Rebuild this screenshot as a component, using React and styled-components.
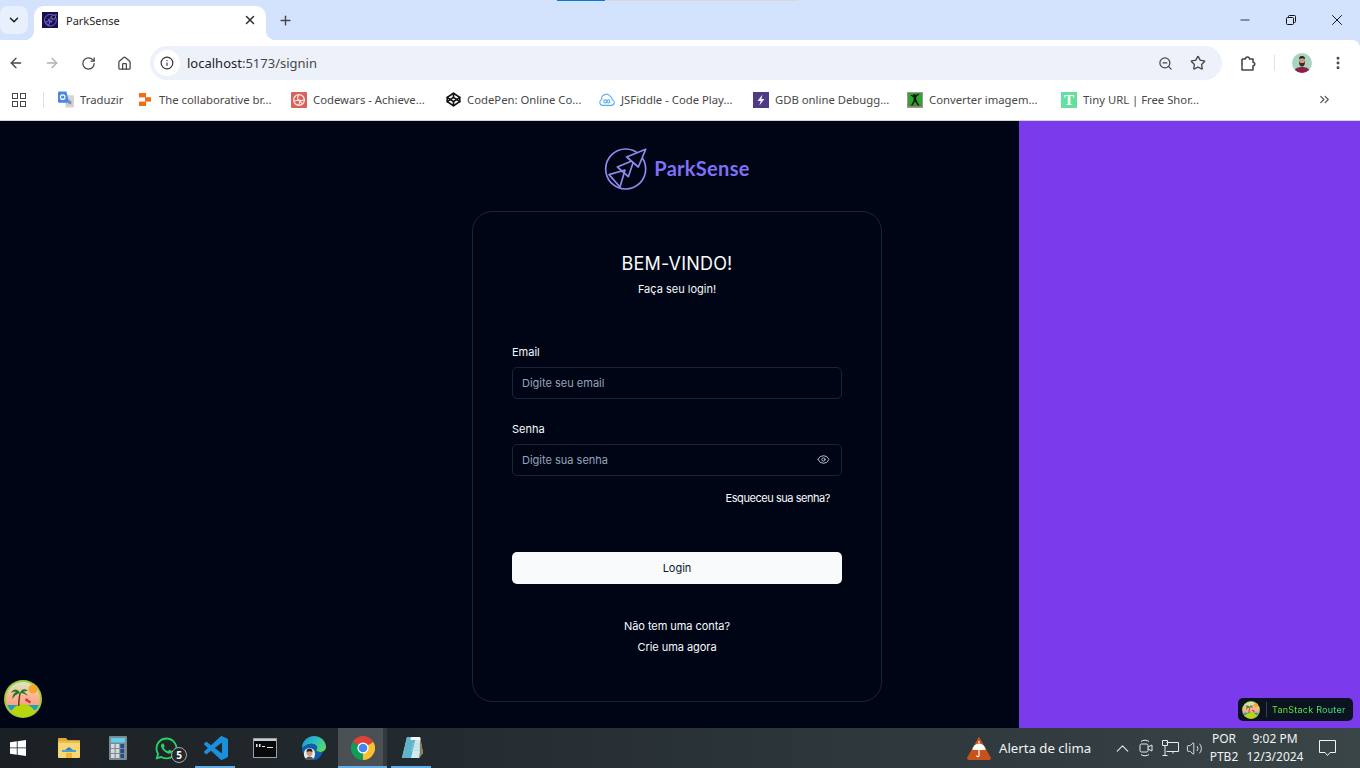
import React from "react";
import styled, { createGlobalStyle } from "styled-components";
import {
  ArrowLeft,
  ArrowRight,
  ChevronDown,
  ChevronUp,
  ChevronsRight,
  Codepen,
  EllipsisVertical,
  Eye,
  House,
  Info,
  Minus,
  Plus,
  RotateCw,
  Star,
  Volume2,
  X,
  ZoomOut,
} from "lucide-react";
import { FaWhatsapp } from "react-icons/fa";

const GlobalStyle = createGlobalStyle`
  * { box-sizing: border-box; }
  html, body { margin: 0; height: 100%; overflow: hidden; }
  body { font-family: "Noto Sans", "Liberation Sans", sans-serif; }
  #root { height: 100%; }
`;

function ParkLogo({ size = 44, weight = 5 }) {
  return (
    <svg width={size} height={size} viewBox="12 8 132 132" fill="none" stroke="#9488ee" strokeWidth={weight} strokeLinejoin="round">
      <circle cx="77" cy="71" r="60" />
      <path d="M102 44 52 65 85 94Z" />
      <path d="M75 74 27 88 60 125Z" />
      <path d="M137 12 80 35 115 65Z" fill="#000515" />
    </svg>
  );
}

function TranslateIcon() {
  return (
    <svg width="17" height="17" viewBox="0 0 17 17">
      <path d="M7 4h9a1 1 0 0 1 1 1v11a1 1 0 0 1-1 1H8z" fill="#d4d4d4" />
      <path d="M1 0h8l3 12H1a1 1 0 0 1-1-1V1a1 1 0 0 1 1-1z" fill="#4a86e8" />
      <path d="M12.5 8l1 2.7 1.8.1-1.4 1.2.5 2-1.9-1.1-1.7 1.1.4-2-1.3-1.2 1.8-.1z" fill="#8a8f98" />
      <circle cx="5" cy="6" r="2.4" fill="none" stroke="#fff" strokeWidth="1.2" />
    </svg>
  );
}

function FigmaBitsIcon() {
  return (
    <svg width="12" height="13" viewBox="0 0 12 13" fill="#f56a14">
      <rect x="0" y="0" width="7" height="4.4" />
      <rect x="6" y="4.2" width="6" height="4.4" />
      <rect x="0" y="8.6" width="7" height="4.4" />
    </svg>
  );
}

function CodewarsIcon() {
  return (
    <svg width="16" height="16" viewBox="0 0 16 16" fill="none">
      <rect width="16" height="16" rx="1" fill="#d9635b" />
      <circle cx="8" cy="8" r="5.4" stroke="#fbe7e4" strokeWidth="1.3" />
      <path d="M8 2.6C6 6 6 7 8 8s6 0 5.4-1M2.6 9C6 8 7 9 8 8s1 5-1 5.4M8 8c2 2 3 4 4 4" stroke="#fbe7e4" strokeWidth="1.1" />
    </svg>
  );
}

function FiddleIcon() {
  return (
    <svg width="16" height="13" viewBox="0 0 16 13" fill="none" stroke="#5aaef0" strokeWidth="1.1">
      <path d="M3.6 12.4A3 3 0 0 1 2.8 6.6 3.8 3.8 0 0 1 6 1.6a4 4 0 0 1 5.4 1.9 2.9 2.9 0 0 1 1.6 3 3 3 0 0 1-.4 5.9z" />
      <circle cx="6.2" cy="8.4" r="1.5" />
      <circle cx="9.4" cy="8.4" r="1.5" />
    </svg>
  );
}

function GdbIcon() {
  return (
    <svg width="16" height="16" viewBox="0 0 16 16">
      <rect width="16" height="16" fill="#4f3a85" />
      <path d="M9.4 2.6 4.6 9h3l-1.2 4.6L11.4 7H8.5z" fill="#f1eefb" />
    </svg>
  );
}

function ConverterIcon() {
  return (
    <svg width="16" height="16" viewBox="0 0 16 16">
      <rect width="16" height="16" fill="#9a9a9a" />
      <rect x="1" y="1" width="14" height="13" fill="#2fa52f" />
      <rect x="1" y="12.5" width="14" height="2" fill="#5f7a3a" />
      <path d="M8 3.4 12 1.6l.3.7L9.2 5l.2 3 3 5.6H11L8 9.6 5.6 13.6H4L6.6 8.4V5.6L3.6 3.6l.4-.6z" fill="#0f1a0f" />
      <circle cx="7.6" cy="3.2" r="1.2" fill="#0f1a0f" />
    </svg>
  );
}

function BeachLogo({ size = 38 }) {
  return (
    <svg width={size} height={size} viewBox="0 0 38 38">
      <defs>
        <linearGradient id={`sky${size}`} x1="0" y1="0" x2="0" y2="1">
          <stop offset="0" stopColor="#d7e8c4" />
          <stop offset="0.45" stopColor="#fbb38f" />
          <stop offset="1" stopColor="#f98d7e" />
        </linearGradient>
      </defs>
      <circle cx="19" cy="19" r="19" fill="#9ccd3c" />
      <circle cx="19" cy="19" r="17" fill={`url(#sky${size})`} />
      <circle cx="29" cy="9" r="4.5" fill="#f7a52b" />
      <path d="M3.4 25h31.2a17 17 0 0 1-3 5H6.4a17 17 0 0 1-3-5z" fill="#1ea0b4" />
      <path d="M7 32c3-6 8-8 12-8s9 2 12 8a17 17 0 0 1-24 0z" fill="#b6d60f" />
      <path d="M14 26c0-5 .5-9 1.5-13h1.4c-1 4-1.4 8-1.4 13z" fill="#5c3a1d" />
      <path d="M16 13C13 8 9 9 7 13c2-1.500 4-1.500 5-1-2 1-4 4-3.500 7 1.500-3 4-5 7.500-6zM16 13c1-4 5-5 8-2-2 0-3.500 0-5 1 2 0 4 2 4.500 4-2-2-4.500-3-7.500-3z" fill="#1f7a26" />
      <path d="M22 18l5 3.500-1 2-5-3z" fill="#d2314a" />
    </svg>
  );
}

function WindowsLogo() {
  return (
    <svg width="16" height="16" viewBox="0 0 16 16" fill="#fff">
      <path d="M0 2.300 6.800 1.300v6.200H0zM7.600 1.200 16 0v7.500H7.600zM0 8.300h6.800v6.400L0 13.700zM7.600 8.300H16V16l-8.400-1.200z" />
    </svg>
  );
}

function FolderIcon() {
  return (
    <svg width="22" height="20" viewBox="0 0 22 20">
      <path d="M0 1a1 1 0 0 1 1-1h7l2 2.500H0z" fill="#e0a92e" />
      <rect y="2.500" width="22" height="17.500" rx="1" fill="#f7d774" />
      <rect y="2.500" width="22" height="2.500" fill="#eebc48" />
      <path d="M4 14h14v-2H4z" fill="#4a9fd8" />
      <path d="M8 20v-5h6v5z" fill="#f3b32c" />
      <path d="M7 12l4-3 4 3z" fill="#2a7fc0" />
    </svg>
  );
}

function CalculatorIcon() {
  const keys = [0, 1, 2, 3, 4, 5, 6, 7, 8];
  return (
    <svg width="18" height="24" viewBox="0 0 18 24">
      <rect width="18" height="24" rx="1" fill="#7c8a94" />
      <rect x="2" y="2" width="14" height="4.500" fill="#5fd0ea" />
      {keys.map((k) => (
        <rect key={k} x={2 + (k % 3) * 4.700} y={8 + Math.floor(k / 3) * 5} width="3.600" height="4" fill={k % 3 === 2 ? "#1f4e8c" : "#d5dadd"} />
      ))}
    </svg>
  );
}

function VsCodeIcon() {
  return (
    <svg width="24" height="24" viewBox="0 0 24 24" fill="#1c8fdc">
      <path d="M23.150 2.587 18.210.21a1.494 1.494 0 0 0-1.705.29l-9.460 8.630-4.120-3.128a.999.999 0 0 0-1.276.057L.327 7.261A1 1 0 0 0 .326 8.740L3.899 12 .326 15.260a1 1 0 0 0 .001 1.479L1.650 17.940a.999.999 0 0 0 1.276.057l4.120-3.128 9.460 8.630a1.492 1.492 0 0 0 1.704.29l4.942-2.377A1.500 1.500 0 0 0 24 20.060V3.939a1.500 1.500 0 0 0-.850-1.352zm-5.146 14.861L10.826 12l7.178-5.448v10.896z" />
    </svg>
  );
}

function CmdIcon() {
  return (
    <svg width="24" height="20" viewBox="0 0 24 20">
      <rect width="24" height="20" fill="#9aa0a4" />
      <rect x="1" y="1" width="22" height="18" fill="#0a0a0a" />
      <rect x="1" y="1" width="22" height="2" fill="#c9cdd0" />
      <path d="M3 6h1.500v3H3zM6 6h1.500v3H6zM9 8h3v1H9zM14 9h6v1h-6z" fill="#e8e8e8" />
    </svg>
  );
}

function EdgeIcon() {
  return (
    <svg width="24" height="24" viewBox="0 0 24 24">
      <defs>
        <linearGradient id="edgeTop" x1="0" y1="0" x2="1" y2="0.6">
          <stop offset="0" stopColor="#1b8fd6" />
          <stop offset="0.55" stopColor="#2cc0c4" />
          <stop offset="1" stopColor="#58d66a" />
        </linearGradient>
      </defs>
      <path d="M0 12C0 5 5.500 0 12 0c7 0 12 5 12 11 0 3-2.500 5-6 5-2.500 0-4-1-4-2 1-1 1.500-2 .8-3.500C13.500 7.500 9 7 5.500 8.500 3 9.700 1 11 0 12z" fill="url(#edgeTop)" />
      <path d="M0 12c1-1 3-2.300 5.500-3.500C9 7 13.500 7.500 14.800 10.500c.7 1.500.2 2.500-.8 3.500 0 1 1.500 2 4 2 1 0 2-.2 3-.6-1.500 4.500-5 8.600-9.500 8.600C5 24 0 18.500 0 12z" fill="#0f5fae" />
      <rect x="2" y="12" width="11" height="12" rx="5.500" fill="#f1efec" />
      <circle cx="7.500" cy="17" r="3" fill="#c99a80" />
      <path d="M4.500 16c0-2.400 1.300-3.400 3-3.400s3 1 3 3.400c-2-1-4-1-6 0z" fill="#2a1f1a" />
      <path d="M3.500 24c.5-2.500 2-3.500 4-3.500s3.500 1 4 3.500z" fill="#555" />
    </svg>
  );
}

function ChromeIcon() {
  return (
    <svg width="24" height="24" viewBox="0 0 24 24">
      <path d="M12 12 1.600 6a12 12 0 0 1 20.800 0z" fill="#db4437" />
      <path d="M12 12 1.600 6A12 12 0 0 0 12 24z" fill="#0f9d58" />
      <path d="M12 12v12A12 12 0 0 0 22.400 6z" fill="#fbc02d" />
      <circle cx="12" cy="12" r="5.600" fill="#fff" />
      <circle cx="12" cy="12" r="4.300" fill="#4285f4" />
    </svg>
  );
}

function NotepadIcon() {
  return (
    <svg width="24" height="24" viewBox="0 0 24 24">
      <path d="M7 1h13l3 16-4 5H2z" fill="#cfeaf0" />
      <path d="M7 1 2 22h9l5-21z" fill="#5fb4c8" />
      <path d="M11 1h9l.7 3H10.300z" fill="#f2f7f7" />
      <path d="M20 1l3 16-4 5 .8-5z" fill="#8a7a5a" />
      <path d="M12 8h7M11.500 11h8M11 14h8" stroke="#a8d6e0" strokeWidth="0.800" />
    </svg>
  );
}

function WeatherAlertIcon() {
  return (
    <svg width="24" height="24" viewBox="0 0 24 24">
      <path d="M12 1.500 23.500 22a1 1 0 0 1-1 1.500h-21a1 1 0 0 1-1-1.500z" fill="#c7521a" stroke="#c7521a" strokeLinejoin="round" />
      <path d="M5.500 14a6.500 6.500 0 0 1 13 0z" fill="#fff" />
      <path d="M12 14v5.500a1.200 1.200 0 0 1-2.400 0" fill="none" stroke="#fff" strokeWidth="1.200" />
      <path d="M12 5v2" stroke="#fff" strokeWidth="1.200" />
    </svg>
  );
}

function MeetIcon() {
  return (
    <svg width="14" height="18" viewBox="0 0 14 18" fill="none" stroke="#e8ecee" strokeWidth="1">
      <rect x="1" y="5" width="8" height="8" rx="1.500" />
      <path d="m9 8 4-2v6l-4-2M2 2.500C4 .8 8 .8 10 2.500M2 15.500c2 1.700 6 1.700 8 0" />
    </svg>
  );
}

function NetworkIcon() {
  return (
    <svg width="17" height="16" viewBox="0 0 17 16" fill="none" stroke="#e8ecee" strokeWidth="1">
      <path d="M4.500 2.500h12v9h-12M9 11.500h6M11 11.500v2M.500.500h5v5h-5zM3 5.500v10M.500 15.500h5" />
    </svg>
  );
}

function NotificationIcon() {
  return (
    <svg width="17" height="16" viewBox="0 0 17 16" fill="none" stroke="#f2f4f5" strokeWidth="1">
      <path d="M.500.500h16v12H11l-2.500 3-2.500-3H.500z" />
    </svg>
  );
}

function ProfileAvatar() {
  return (
    <svg width="20" height="20" viewBox="0 0 20 20">
      <clipPath id="avatarClip"><circle cx="10" cy="10" r="10" /></clipPath>
      <g clipPath="url(#avatarClip)">
        <rect width="20" height="20" fill="#a8d5c2" />
        <path d="M2 20c0-4 3-6 8-6s8 2 8 6z" fill="#8e2048" />
        <rect x="7" y="4" width="6" height="8" rx="3" fill="#c99a80" />
        <path d="M7 8c0 4 1 5.500 3 5.500S13 12 13 8l-1 2H8z" fill="#3a2a22" />
        <path d="M7 6c0-2 1-3 3-3s3 1 3 3c-2-1-4-1-6 0z" fill="#2a1f1a" />
      </g>
    </svg>
  );
}

function RestoreIcon() {
  return (
    <svg width="10" height="10" viewBox="0 0 10 10" fill="none" stroke="#111" strokeWidth="1">
      <rect x=".500" y="2.500" width="7" height="7" rx="1" />
      <path d="M2.500 2.500v-1a1 1 0 0 1 1-1h5a1 1 0 0 1 1 1v5a1 1 0 0 1-1 1h-1" />
    </svg>
  );
}

function PuzzleIcon() {
  return (
    <svg width="16" height="16" viewBox="0 0 16 16" fill="none" stroke="#474747" strokeWidth="1.600" strokeLinejoin="round">
      <path d="M1 4h3.500a2 2 0 0 1 4 0H12v3.300a1.700 1.700 0 0 1 0 3.400V15H1v-3.500" />
      <path d="M1 11.500V4" />
    </svg>
  );
}

function App() {
  const bookmarks = [
    { title: "Traduzir", width: 79, icon: <TranslateIcon /> },
    { title: "The collaborative br...", width: 154, icon: <FigmaBitsIcon /> },
    { title: "Codewars - Achieve...", width: 154, icon: <CodewarsIcon /> },
    { title: "CodePen: Online Co...", width: 154, icon: <Codepen size={15} color="#111" strokeWidth={2.6} /> },
    { title: "JSFiddle - Code Play...", width: 154, icon: <FiddleIcon /> },
    { title: "GDB online Debugg...", width: 154, icon: <GdbIcon /> },
    { title: "Converter imagem...", width: 154, icon: <ConverterIcon /> },
    { title: "Tiny URL | Free Shor...", width: 154, icon: <TinyFavicon>T</TinyFavicon> },
  ];

  return (
    <Screen>
      <GlobalStyle />
      <Browser>
        <ProgressSliver />
        <TabStrip>
          <TabSearch>
            <ChevronDown size={14} color="#1f1f1f" strokeWidth={2.6} />
          </TabSearch>
          <ActiveTab>
            <TabFavicon>
              <ParkLogo size={13} weight={7} />
            </TabFavicon>
            <TabTitle>ParkSense</TabTitle>
            <X size={14} color="#333" strokeWidth={2.6} />
          </ActiveTab>
          <NewTab>
            <Plus size={15} color="#444" strokeWidth={2.2} />
          </NewTab>
          <WindowControls>
            <WindowButton><Minus size={14} color="#111" strokeWidth={1.400} /></WindowButton>
            <WindowButton><RestoreIcon /></WindowButton>
            <WindowButton><X size={18} color="#111" strokeWidth={1.300} /></WindowButton>
          </WindowControls>
        </TabStrip>

        <Toolbar>
          <NavButton><ArrowLeft size={16} color="#474747" strokeWidth={2} /></NavButton>
          <NavButton><ArrowRight size={16} color="#b0b0b0" strokeWidth={2} /></NavButton>
          <NavButton><RotateCw size={15} color="#474747" strokeWidth={2} /></NavButton>
          <NavButton><House size={15} color="#474747" strokeWidth={2} /></NavButton>
          <UrlBar>
            <SiteInfo><Info size={14} color="#333" strokeWidth={2} /></SiteInfo>
            <UrlText>localhost<span>:5173/signin</span></UrlText>
            <UrlActions>
              <ZoomOut size={15} color="#474747" strokeWidth={2} />
              <Star size={16} color="#474747" strokeWidth={2} />
            </UrlActions>
          </UrlBar>
          <ToolbarEnd>
            <PuzzleIcon />
            <ToolbarDivider />
            <ProfileAvatar />
            <EllipsisVertical size={16} color="#474747" strokeWidth={2.4} />
          </ToolbarEnd>
        </Toolbar>

        <BookmarksBar>
          <AppsGrid>
            <i /><i /><i /><i />
          </AppsGrid>
          <BookmarkDivider />
          {bookmarks.map((b) => (
            <Bookmark key={b.title} $width={b.width}>
              <BookmarkIcon>{b.icon}</BookmarkIcon>
              <span>{b.title}</span>
            </Bookmark>
          ))}
          <MoreBookmarks>
            <ChevronsRight size={15} color="#555" strokeWidth={2} />
          </MoreBookmarks>
        </BookmarksBar>
      </Browser>

      <Main>
        <LoginPane>
          <Brand>
            <ParkLogo />
            <BrandName>ParkSense</BrandName>
          </Brand>
          <Card>
            <Title>BEM-VINDO!</Title>
            <Subtitle>Faça seu login!</Subtitle>
            <FirstLabel htmlFor="email">Email</FirstLabel>
            <Field>
              <Input id="email" placeholder="Digite seu email" />
            </Field>
            <Label htmlFor="senha">Senha</Label>
            <Field>
              <Input id="senha" type="password" placeholder="Digite sua senha" />
              <EyeButton><Eye size={13} color="#c4cad4" strokeWidth={1.700} /></EyeButton>
            </Field>
            <Forgot>Esqueceu sua senha?</Forgot>
            <LoginButton>Login</LoginButton>
            <SignupText>Não tem uma conta?</SignupText>
            <SignupLink>Crie uma agora</SignupLink>
          </Card>
        </LoginPane>
        <AccentPane />
        <QueryToggle>
          <BeachLogo />
        </QueryToggle>
        <RouterToggle>
          <BeachLogo size={18} />
          <RouterDivider />
          <RouterLabel>TanStack Router</RouterLabel>
        </RouterToggle>
      </Main>

      <Taskbar>
        <StartCell><WindowsLogo /></StartCell>
        <TaskCell><FolderIcon /></TaskCell>
        <TaskCell><CalculatorIcon /></TaskCell>
        <TaskCell>
          <FaWhatsapp size={25} color="#25d366" />
          <CountBadge>5</CountBadge>
        </TaskCell>
        <TaskCell $running><VsCodeIcon /></TaskCell>
        <TaskCell><CmdIcon /></TaskCell>
        <TaskCell><EdgeIcon /></TaskCell>
        <TaskCell $running $active><ChromeIcon /></TaskCell>
        <TaskCell $running><NotepadIcon /></TaskCell>
        <Tray>
          <WeatherAlert>
            <WeatherAlertIcon />
            <span>Alerta de clima</span>
          </WeatherAlert>
          <TrayIcon $width={24}><ChevronUp size={21} color="#e8ecee" strokeWidth={1.200} /></TrayIcon>
          <TrayIcon $width={24}><MeetIcon /></TrayIcon>
          <TrayIcon $width={24}><NetworkIcon /></TrayIcon>
          <TrayIcon $width={24}><Volume2 size={17} color="#e8ecee" strokeWidth={1.300} /></TrayIcon>
          <TrayText $width={36}>POR<br />PTB2</TrayText>
          <TrayText $width={66}>9:02 PM<br />12/3/2024</TrayText>
          <TrayIcon $width={38}><NotificationIcon /></TrayIcon>
        </Tray>
      </Taskbar>
    </Screen>
  );
}

const Screen = styled.div`
  display: flex;
  flex-direction: column;
  height: 768px;
  width: 1360px;
`;

const Browser = styled.header`
  position: relative;
  flex: 0 0 121px;
  background: #d3e3fd;
`;

const ProgressSliver = styled.div`
  position: absolute;
  top: 0;
  left: 557px;
  width: 241px;
  height: 1px;
  background: linear-gradient(90deg, #0b78d8 0 48px, #d8d8d8 48px);
`;

const TabStrip = styled.div`
  display: flex;
  align-items: flex-end;
  height: 40px;
`;

const TabSearch = styled.div`
  display: flex;
  align-items: center;
  justify-content: center;
  width: 28px;
  height: 28px;
  margin-bottom: 6px;
  background: #e8f0fe;
  border-radius: 8px;
`;

const ActiveTab = styled.div`
  position: relative;
  display: flex;
  align-items: center;
  width: 232px;
  height: 34px;
  margin-left: 6px;
  padding: 0 9px 6px 8px;
  background: #fff;
  border-radius: 10px 10px 0 0;

  &::before,
  &::after {
    content: "";
    position: absolute;
    bottom: 0;
    width: 10px;
    height: 10px;
  }
  &::before {
    left: -10px;
    background: radial-gradient(circle at 0 0, transparent 10px, #fff 10.500px);
  }
  &::after {
    right: -10px;
    background: radial-gradient(circle at 100% 0, transparent 10px, #fff 10.500px);
  }
`;

const TabFavicon = styled.div`
  display: flex;
  align-items: center;
  justify-content: center;
  width: 16px;
  height: 16px;
  background: #170f52;
`;

const TabTitle = styled.span`
  flex: 1;
  margin-left: 8px;
  font-size: 11px;
  color: #1f1f1f;
`;

const NewTab = styled.div`
  display: flex;
  align-items: center;
  justify-content: center;
  width: 28px;
  height: 28px;
  margin: 0 0 6px 5px;
`;

const WindowControls = styled.div`
  display: flex;
  margin-left: auto;
  align-self: flex-start;
`;

const WindowButton = styled.div`
  display: flex;
  align-items: center;
  justify-content: center;
  width: 46px;
  height: 40px;
`;

const Toolbar = styled.div`
  display: flex;
  align-items: center;
  gap: 4px;
  height: 40px;
  padding-top: 6px;
  background: #fff;
  border-top-right-radius: 8px;
`;

const NavButton = styled.div`
  display: flex;
  align-items: center;
  justify-content: center;
  width: 32px;
  height: 32px;
`;

const UrlBar = styled.div`
  display: flex;
  align-items: center;
  width: 1072px;
  height: 34px;
  margin-left: 6px;
  padding: 0 16px 0 4px;
  background: #edf2fa;
  border-radius: 17px;
`;

const SiteInfo = styled.div`
  display: flex;
  align-items: center;
  justify-content: center;
  width: 26px;
  height: 26px;
  background: #fff;
  border-radius: 50%;
`;

const UrlText = styled.div`
  margin-left: 7px;
  font-size: 13px;
  color: #1f1f1f;

  span {
    color: #474747;
  }
`;

const UrlActions = styled.div`
  display: flex;
  align-items: center;
  gap: 17px;
  margin-left: auto;
`;

const ToolbarEnd = styled.div`
  display: flex;
  align-items: center;
  gap: 18px;
  padding-left: 15px;
`;

const ToolbarDivider = styled.div`
  width: 1px;
  height: 16px;
  margin: 0 -1px;
  background: #d3e3fd;
`;

const BookmarksBar = styled.nav`
  display: flex;
  align-items: center;
  height: 41px;
  padding: 0 0 1px 12px;
  background: #fff;
  border-bottom: 1px solid #d4d4d4;
`;

const AppsGrid = styled.div`
  display: grid;
  grid-template-columns: 6px 6px;
  grid-auto-rows: 6px;
  gap: 2px;

  i {
    border: 1.500px solid #474747;
  }
`;

const BookmarkDivider = styled.div`
  width: 1px;
  height: 16px;
  margin: 0 14px 0 17px;
  background: #d3e3fd;
`;

const Bookmark = styled.div`
  display: flex;
  align-items: center;
  flex: 0 0 ${(p) => p.$width}px;
  gap: 6px;
  font-size: 11.300px;
  color: #474747;
  white-space: nowrap;
`;

const BookmarkIcon = styled.div`
  display: flex;
  align-items: center;
  justify-content: center;
  width: 16px;
  height: 16px;
`;

const TinyFavicon = styled.div`
  width: 16px;
  height: 16px;
  background: #63e0a0;
  color: #fff;
  font: bold 15px/16px "Liberation Serif", serif;
  text-align: center;
`;

const MoreBookmarks = styled.div`
  display: flex;
  margin-left: 102px;
`;

const Main = styled.main`
  position: relative;
  display: flex;
  flex: 1;
  min-height: 0;
`;

const LoginPane = styled.section`
  display: flex;
  flex: 0 0 1019px;
  flex-direction: column;
  align-items: center;
  padding: 27px 0 0 335px;
  background: #000515;
`;

const AccentPane = styled.aside`
  flex: 1;
  background: #7c3aed;
`;

const Brand = styled.div`
  display: flex;
  align-items: center;
  gap: 6px;
  height: 44px;
`;

const BrandName = styled.span`
  margin-bottom: 4px;
  font-family: Lato, "Noto Sans", sans-serif;
  font-size: 20px;
  font-weight: 700;
  letter-spacing: 0.300px;
  color: #7f70f5;
`;

const Card = styled.div`
  display: flex;
  flex-direction: column;
  width: 410px;
  height: 491px;
  margin-top: 19px;
  padding: 39px 39px 0;
  border: 1px solid #1c2433;
  border-radius: 20px;
  font-family: Inter, "Noto Sans", sans-serif;
  color: #f8fafc;
`;

const Title = styled.h1`
  margin: 0;
  padding-top: 1px;
  font-size: 18px;
  font-weight: 400;
  letter-spacing: 0.200px;
  line-height: 24px;
  text-align: center;
`;

const Subtitle = styled.p`
  margin: 5px 0 0;
  font-size: 11px;
  line-height: 16px;
  text-align: center;
`;

const Label = styled.label`
  margin-top: 22px;
  font-size: 11px;
  font-weight: 400;
  line-height: 16px;
`;

const FirstLabel = styled(Label)`
  margin-top: 47px;
`;

const Field = styled.div`
  position: relative;
  margin-top: 7px;
`;

const Input = styled.input`
  display: block;
  width: 100%;
  height: 32px;
  padding: 0 9px;
  background: transparent;
  border: 1px solid #1c2433;
  border-radius: 5px;
  outline: none;
  font: 11px Inter, "Noto Sans", sans-serif;
  color: #f8fafc;

  &::placeholder {
    color: #94a3b8;
    opacity: 1;
  }
`;

const EyeButton = styled.span`
  position: absolute;
  top: 9px;
  right: 12px;
  display: flex;
`;

const Forgot = styled.a`
  align-self: flex-end;
  margin: 14px 12px 0 0;
  font-size: 11px;
  letter-spacing: -0.450px;
  line-height: 16px;
`;

const LoginButton = styled.button`
  height: 32px;
  margin-top: 46px;
  background: #f8fafc;
  border: 0;
  border-radius: 5px;
  font: 400 11px Inter, "Noto Sans", sans-serif;
  color: #0f172a;
`;

const SignupText = styled.p`
  margin: 34px 0 0;
  font-size: 11px;
  letter-spacing: -0.050px;
  line-height: 16px;
  text-align: center;
`;

const SignupLink = styled.a`
  margin-top: 5px;
  font-size: 11px;
  letter-spacing: -0.050px;
  line-height: 16px;
  text-align: center;
`;

const QueryToggle = styled.div`
  position: absolute;
  left: 4px;
  bottom: 10px;
  display: flex;
`;

const RouterToggle = styled.div`
  position: absolute;
  right: 7px;
  bottom: 7px;
  display: flex;
  align-items: center;
  width: 115px;
  height: 23px;
  padding-left: 4px;
  background: #0b1220;
  border-radius: 5px;
`;

const RouterDivider = styled.div`
  width: 1px;
  height: 15px;
  margin: 0 5px 0 6px;
  background: #3a4250;
`;

const RouterLabel = styled.span`
  font: 400 9px Inter, "Noto Sans", sans-serif;
  letter-spacing: 0.250px;
  white-space: nowrap;
  background: linear-gradient(90deg, #7cf025, #33f0a0);
  background-clip: text;
  color: transparent;
`;

const Taskbar = styled.footer`
  display: flex;
  flex: 0 0 40px;
  background: linear-gradient(90deg, #1b2024 0%, #262e33 40%, #3a4548 100%);
  color: #f0f3f4;
`;

const StartCell = styled.div`
  display: flex;
  align-items: center;
  width: 44px;
  padding-left: 10px;
`;

const TaskCell = styled.div`
  position: relative;
  display: flex;
  align-items: center;
  justify-content: center;
  width: 49px;
  background: ${(p) =>
    p.$active
      ? "linear-gradient(90deg, rgba(255,255,255,0.18) 0 45px, rgba(255,255,255,0.08) 45px)"
      : "transparent"};

  &::after {
    content: "";
    position: absolute;
    bottom: 0;
    left: ${(p) => (p.$active ? "0" : "4px")};
    right: ${(p) => (p.$active ? "0" : "5px")};
    height: 2px;
    background: ${(p) => (p.$running ? "#62ade6" : "transparent")};
  }
`;

const CountBadge = styled.span`
  position: absolute;
  top: 19px;
  left: 29px;
  width: 16px;
  height: 16px;
  background: #23292d;
  border: 1px solid #a5abaf;
  border-radius: 50%;
  font-size: 10px;
  font-weight: 700;
  line-height: 14px;
  text-align: center;
  color: #fff;
`;

const Tray = styled.div`
  display: flex;
  align-items: center;
  margin-left: auto;
  padding-right: 14px;
`;

const WeatherAlert = styled.div`
  display: flex;
  align-items: center;
  gap: 8px;
  width: 143px;
  font-size: 13.200px;
`;

const TrayIcon = styled.div`
  display: flex;
  align-items: center;
  justify-content: center;
  width: ${(p) => p.$width}px;
`;

const TrayText = styled.div`
  width: ${(p) => p.$width}px;
  font-size: 12px;
  line-height: 18px;
  text-align: center;
  white-space: nowrap;
`;

export default App;
